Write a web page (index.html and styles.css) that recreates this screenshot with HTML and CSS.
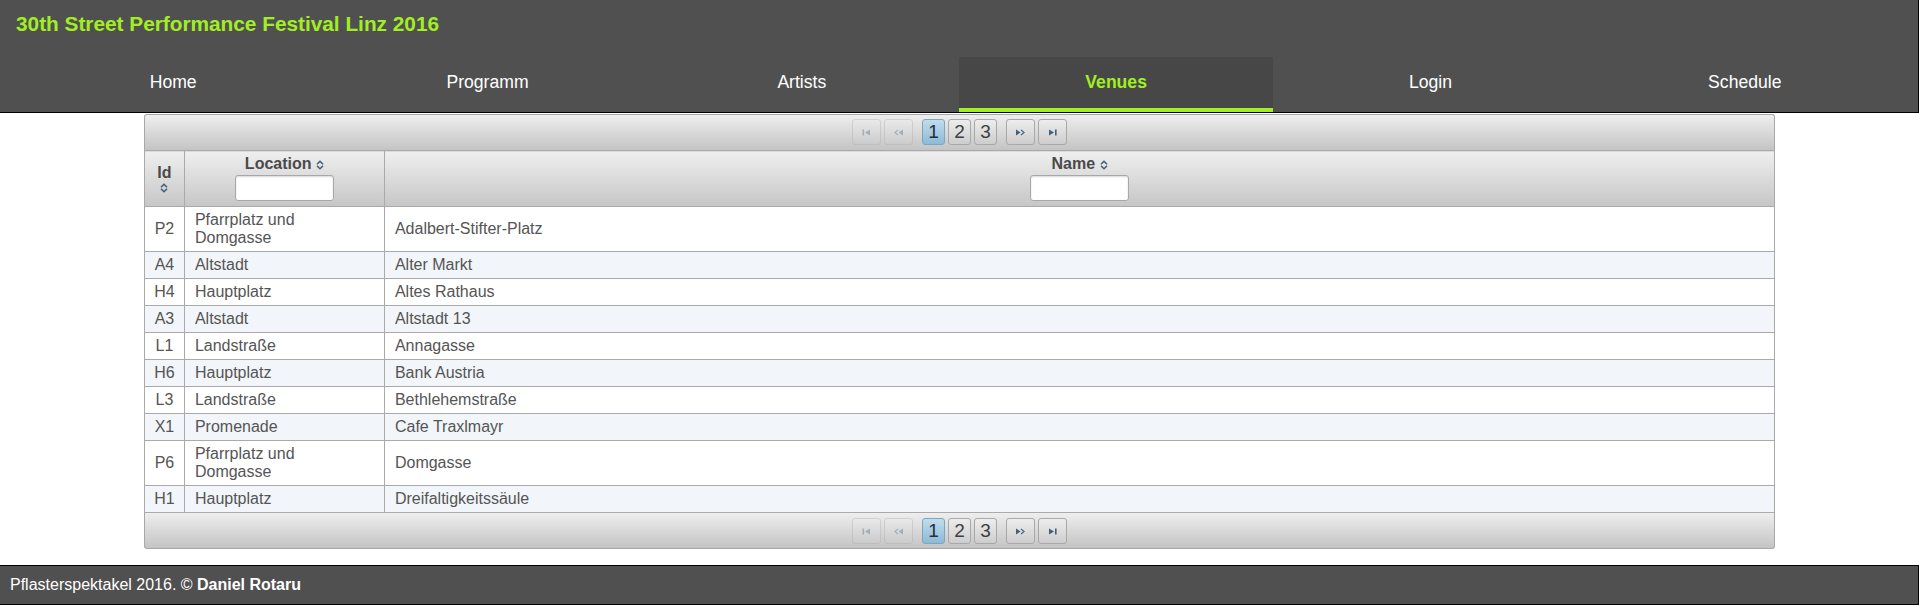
FILE: index.html
```html
<!DOCTYPE html>
<html lang="de">
<head>
<meta charset="utf-8">
<title>Venues - 30th Street Performance Festival Linz 2016</title>
<link rel="stylesheet" href="styles.css">
</head>
<body>
<header class="site-header">
  <h1 class="site-title">30th Street Performance Festival Linz 2016</h1>
  <nav class="main-nav">
    <a class="nav-item" href="#">Home</a>
    <a class="nav-item" href="#">Programm</a>
    <a class="nav-item" href="#">Artists</a>
    <a class="nav-item active" href="#">Venues</a>
    <a class="nav-item" href="#">Login</a>
    <a class="nav-item" href="#">Schedule</a>
  </nav>
</header>

<main class="content">
  <div class="datatable">
    <div class="paginator paginator-top">
      <span class="pg-btn disabled"><svg class="pg-icon" viewBox="0 0 11 7" width="11" height="7"><rect x="1.5" y="0.5" width="1.6" height="6"/><polygon points="9,0.5 9,6.5 4,3.5"/></svg></span>
      <span class="pg-btn disabled"><svg class="pg-icon" viewBox="0 0 11 7" width="11" height="7"><polyline class="chev" points="5,0.9 2,3.5 5,6.1"/><polygon points="10,0.5 10,6.5 5.5,3.5"/></svg></span>
      <span class="pg-pages"><span class="pg-page active">1</span><span class="pg-page">2</span><span class="pg-page">3</span></span>
      <span class="pg-btn"><svg class="pg-icon" viewBox="0 0 11 7" width="11" height="7"><polygon points="1,0.5 1,6.5 5.5,3.5"/><polyline class="chev" points="6,0.9 9,3.5 6,6.1"/></svg></span>
      <span class="pg-btn"><svg class="pg-icon" viewBox="0 0 11 7" width="11" height="7"><polygon points="2,0.5 2,6.5 7,3.5"/><rect x="8" y="0.5" width="1.6" height="6"/></svg></span>
    </div>
    <table class="dt-table">
      <colgroup>
        <col class="col-id">
        <col class="col-location">
        <col class="col-name">
      </colgroup>
      <thead>
        <tr>
          <th class="th-id">Id<span class="sort sort-block"><svg viewBox="0 0 8 10" width="8" height="10"><polyline points="1,4.2 4,1.2 7,4.2"/><polyline points="1,5.8 4,8.8 7,5.8"/></svg></span></th>
          <th>Location <span class="sort"><svg viewBox="0 0 8 10" width="8" height="10"><polyline points="1,4.2 4,1.2 7,4.2"/><polyline points="1,5.8 4,8.8 7,5.8"/></svg></span><input class="filter" type="text"></th>
          <th>Name <span class="sort"><svg viewBox="0 0 8 10" width="8" height="10"><polyline points="1,4.2 4,1.2 7,4.2"/><polyline points="1,5.8 4,8.8 7,5.8"/></svg></span><input class="filter" type="text"></th>
        </tr>
      </thead>
      <tbody>
        <tr><td class="td-id">P2</td><td>Pfarrplatz und Domgasse</td><td>Adalbert-Stifter-Platz</td></tr>
        <tr><td class="td-id">A4</td><td>Altstadt</td><td>Alter Markt</td></tr>
        <tr><td class="td-id">H4</td><td>Hauptplatz</td><td>Altes Rathaus</td></tr>
        <tr><td class="td-id">A3</td><td>Altstadt</td><td>Altstadt 13</td></tr>
        <tr><td class="td-id">L1</td><td>Landstraße</td><td>Annagasse</td></tr>
        <tr><td class="td-id">H6</td><td>Hauptplatz</td><td>Bank Austria</td></tr>
        <tr><td class="td-id">L3</td><td>Landstraße</td><td>Bethlehemstraße</td></tr>
        <tr><td class="td-id">X1</td><td>Promenade</td><td>Cafe Traxlmayr</td></tr>
        <tr><td class="td-id">P6</td><td>Pfarrplatz und Domgasse</td><td>Domgasse</td></tr>
        <tr><td class="td-id">H1</td><td>Hauptplatz</td><td>Dreifaltigkeitssäule</td></tr>
      </tbody>
    </table>
    <div class="paginator paginator-bottom">
      <span class="pg-btn disabled"><svg class="pg-icon" viewBox="0 0 11 7" width="11" height="7"><rect x="1.5" y="0.5" width="1.6" height="6"/><polygon points="9,0.5 9,6.5 4,3.5"/></svg></span>
      <span class="pg-btn disabled"><svg class="pg-icon" viewBox="0 0 11 7" width="11" height="7"><polyline class="chev" points="5,0.9 2,3.5 5,6.1"/><polygon points="10,0.5 10,6.5 5.5,3.5"/></svg></span>
      <span class="pg-pages"><span class="pg-page active">1</span><span class="pg-page">2</span><span class="pg-page">3</span></span>
      <span class="pg-btn"><svg class="pg-icon" viewBox="0 0 11 7" width="11" height="7"><polygon points="1,0.5 1,6.5 5.5,3.5"/><polyline class="chev" points="6,0.9 9,3.5 6,6.1"/></svg></span>
      <span class="pg-btn"><svg class="pg-icon" viewBox="0 0 11 7" width="11" height="7"><polygon points="2,0.5 2,6.5 7,3.5"/><rect x="8" y="0.5" width="1.6" height="6"/></svg></span>
    </div>
  </div>
</main>

<footer class="site-footer">Pflasterspektakel 2016. © <strong>Daniel Rotaru</strong></footer>
</body>
</html>
```

FILE: styles.css
```css
* { box-sizing: border-box; }

html, body {
  margin: 0;
  padding: 0;
  overflow: hidden;
}

body {
  font-family: "Liberation Sans", Arial, sans-serif;
  font-size: 16px;
  color: #4f4f4f;
  background: #fff;
}

/* ---------- header ---------- */
.site-header {
  background: #505050;
  border-right: 1px solid #000;
  border-bottom: 1px solid #000;
  padding: 12px 16px 0 16px;
}

.site-title {
  margin: 0;
  font-size: 20.8px;
  line-height: 24px;
  font-weight: bold;
  color: #a1ef23;
}

.main-nav {
  display: flex;
  margin-top: 21px;
}

.nav-item {
  flex: 1 1 0;
  display: block;
  height: 55px;
  line-height: 51px;
  text-align: center;
  color: #fff;
  font-size: 17.6px;
  text-decoration: none;
  border-bottom: 4px solid transparent;
}

.nav-item.active {
  background: #474747;
  color: #a1ef23;
  font-weight: bold;
  border-bottom-color: #a1ef23;
}

/* ---------- datatable ---------- */
.content {
  padding-top: 1px;
}

.datatable {
  width: 85%;
  margin: 0 auto;
}

.paginator {
  display: flex;
  justify-content: center;
  align-items: center;
  gap: 3px;
  border: 1px solid #a8a8a8;
  background: linear-gradient(#eeeeee, #c4c4c4);
}

.paginator-top {
  border-bottom: 0;
  border-radius: 3px 3px 0 0;
  padding: 4px 6px 5px;
}

.paginator-bottom {
  border-top: 0;
  border-radius: 0 0 3px 3px;
  padding: 5px 6px 4px;
}

.pg-btn,
.pg-page {
  display: flex;
  align-items: center;
  justify-content: center;
  height: 26px;
  border: 1px solid #a8a8a8;
  border-radius: 3px;
  background: linear-gradient(#ededed, #cdcdcd);
}

.pg-btn {
  width: 29px;
}

.pg-btn.disabled {
  opacity: 0.35;
}

.pg-icon {
  fill: #42607d;
}

.pg-icon .chev {
  fill: none;
  stroke: #42607d;
  stroke-width: 1.2;
}

.pg-pages {
  display: flex;
  gap: 3px;
  margin: 0 6px;
}

.pg-page {
  width: 23px;
  font-size: 19px;
  color: #3f3f3f;
}

.pg-page.active {
  background: linear-gradient(#c2dcec, #8dbad5);
  border-color: #7ba7c3;
  color: #22313f;
}

.dt-table {
  width: 100%;
  border-collapse: collapse;
  table-layout: fixed;
}

.col-id { width: 40px; }
.col-location { width: 200px; }

.dt-table th,
.dt-table td {
  border: 1px solid #aaaaaa;
}

.dt-table th {
  background: linear-gradient(#efefef, #c6c6c6);
  font-weight: bold;
  text-align: center;
  vertical-align: middle;
  padding: 4px 10px 5px;
  color: #4a4a4a;
  line-height: 18px;
}

.th-id {
  padding-left: 4px;
  padding-right: 4px;
}

.sort {
  display: inline-block;
  vertical-align: -1px;
  line-height: 0;
}

.sort svg {
  fill: none;
  stroke: #3f5d78;
  stroke-width: 1.5;
}

.sort-block {
  display: block;
  margin: 1px auto 0;
  width: 8px;
}

.filter {
  display: block;
  width: 99px;
  height: 26px;
  margin: 2px auto 0;
  border: 1px solid #a8a8a8;
  border-radius: 3px;
  background: #fff;
  box-shadow: inset 0 1px 2px rgba(0, 0, 0, 0.15);
}

.dt-table td {
  padding: 4px 10px;
  line-height: 18px;
  color: #555;
  vertical-align: middle;
}

.dt-table .td-id {
  text-align: center;
  padding-left: 4px;
  padding-right: 4px;
}

.dt-table tbody tr:nth-child(even) td {
  background: #f2f5f9;
}

/* ---------- footer ---------- */
.site-footer {
  margin-top: 16px;
  background: #505050;
  border-top: 1px solid #000;
  border-bottom: 1px solid #000;
  border-right: 1px solid #000;
  color: #fff;
  padding: 10px 10px 10px;
  line-height: 18px;
}

.site-footer strong {
  font-weight: bold;
}
```
